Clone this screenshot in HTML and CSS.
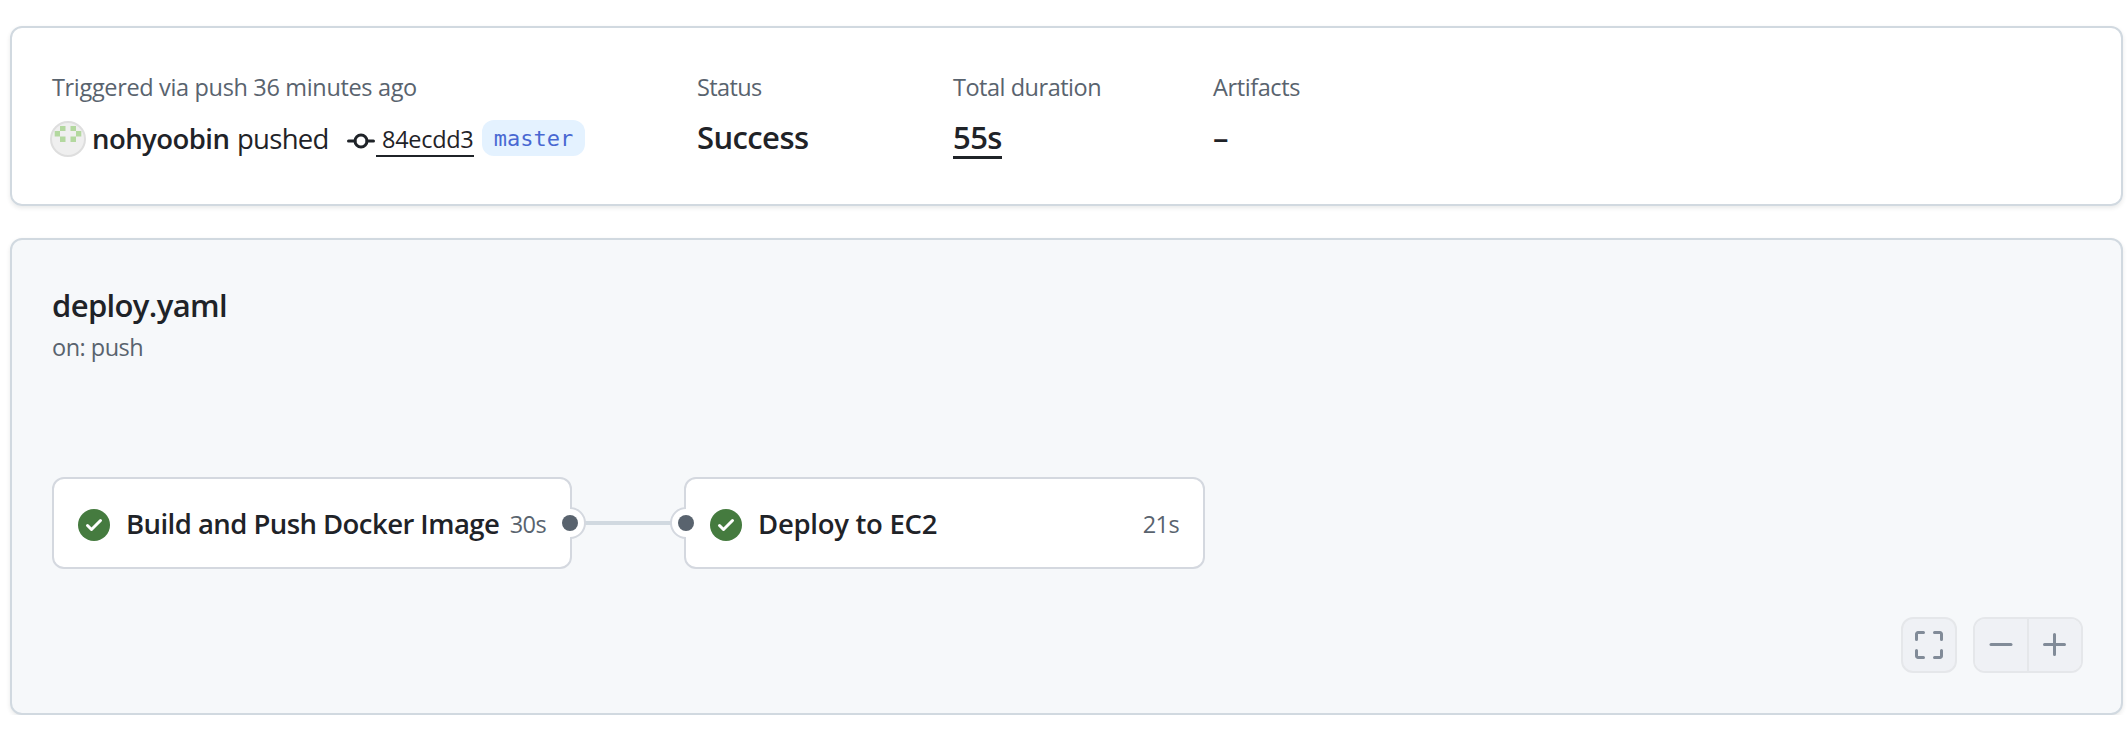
FILE: index.html
```html
<!DOCTYPE html>
<html lang="en">
<head>
<meta charset="utf-8">
<title>deploy.yaml run</title>
<link rel="stylesheet" href="styles.css">
</head>
<body>
<section class="card summary">
  <div class="col">
    <div class="label label-trigger">Triggered via push 36 minutes ago</div>
    <div class="trigger">
      <svg class="avatar" width="36" height="36" viewBox="0 0 36 36"><circle cx="18" cy="18" r="17" fill="#efefef" stroke="#dedede" stroke-width="2"/><path fill="#b3d89f" d="M10 5h5.500v5H10zM4.700 10H10v5.500H4.700zM10 15.500h5.500V21H10zM20.500 5H26v5h-5.500zM26 10h5.300v5.500H26zM20.500 15.500H26V21h-5.500z"/></svg>
      <span class="actor">nohyoobin</span>
      <span class="verb">pushed</span>
      <svg class="commit" width="28" height="16" viewBox="0 0 28 16" fill="none" stroke="#1f2328" stroke-width="3" stroke-linecap="round"><circle cx="14" cy="8" r="6"/><path d="M1.500 8H8M20 8h6.500"/></svg>
      <a class="sha">84ecdd3</a>
      <span class="branch">master</span>
    </div>
  </div>
  <div class="col">
    <div class="label label-status">Status</div>
    <div class="value value-status">Success</div>
  </div>
  <div class="col">
    <div class="label label-duration">Total duration</div>
    <div class="value"><a class="duration">55s</a></div>
  </div>
  <div class="col">
    <div class="label label-artifacts">Artifacts</div>
    <div class="value">–</div>
  </div>
</section>

<section class="card workflow">
  <h1 class="title">deploy.yaml</h1>
  <div class="event">on: push</div>
  <div class="graph">
    <div class="job">
      <svg class="check" width="32" height="32" viewBox="0 0 32 32"><circle cx="16" cy="16" r="16" fill="#457b3f"/><path d="M9.500 16.500l4 4L22.500 11.500" fill="none" stroke="#fff" stroke-width="3" stroke-linecap="round" stroke-linejoin="round"/></svg>
      <span class="name name-build">Build and Push Docker Image</span>
      <span class="time">30s</span>
      <svg class="port port-out" width="32" height="34" viewBox="0 0 32 34"><circle cx="16" cy="17" r="15" fill="#fff"/><path d="M16 2a15 15 0 0 1 0 30" fill="none" stroke="#d4d8df" stroke-width="2"/><circle cx="16" cy="17" r="8" fill="#59636e"/></svg>
    </div>
    <div class="edge"></div>
    <div class="job">
      <svg class="port port-in" width="32" height="34" viewBox="0 0 32 34"><circle cx="16" cy="17" r="15" fill="#fff"/><path d="M16 2a15 15 0 0 0 0 30" fill="none" stroke="#d4d8df" stroke-width="2"/><circle cx="16" cy="17" r="8" fill="#59636e"/></svg>
      <svg class="check" width="32" height="32" viewBox="0 0 32 32"><circle cx="16" cy="16" r="16" fill="#457b3f"/><path d="M9.500 16.500l4 4L22.500 11.500" fill="none" stroke="#fff" stroke-width="3" stroke-linecap="round" stroke-linejoin="round"/></svg>
      <span class="name name-deploy">Deploy to EC2</span>
      <span class="time">21s</span>
    </div>
  </div>
  <div class="controls">
    <button class="btn single" aria-label="Fit"><svg width="28" height="28" viewBox="0 0 28 28"><path d="M1.500 8.500V3a1.500 1.500 0 0 1 1.500-1.500h5.500M19.500 1.500H25A1.500 1.500 0 0 1 26.500 3v5.500M26.500 19.500V25a1.500 1.500 0 0 1-1.500 1.500h-5.500M8.500 26.500H3A1.500 1.500 0 0 1 1.500 25v-5.500"/></svg></button>
    <div class="group">
      <button class="btn" aria-label="Zoom out"><svg width="24" height="24" viewBox="0 0 24 24"><path d="M2 11.500h20"/></svg></button>
      <button class="btn" aria-label="Zoom in"><svg width="24" height="24" viewBox="0 0 24 24"><path d="M1.500 11.500h20M11.500 1.500v20"/></svg></button>
    </div>
  </div>
</section>
</body>
</html>
```
FILE: styles.css
```css
* { box-sizing: border-box; }
body {
  margin: 0;
  padding: 26px 5px 0 10px;
  background: #fff;
  color: #1f2328;
  font-family: "Open Sans", "Noto Sans", sans-serif;
}
svg { display: block; flex: none; }
.card {
  border: 2px solid #d1d9e0;
  border-radius: 12px;
  box-shadow: 0 2px 4px rgba(31, 35, 40, 0.1);
}
.summary {
  height: 180px;
  padding: 40px 40px 0;
  display: grid;
  grid-template-columns: 645px 256px 260px 1fr;
}
.label {
  font-size: 23.5px;
  line-height: 38px;
  color: #59636e;
  white-space: nowrap;
}
.label-trigger { letter-spacing: -0.34px; }
.label-status { letter-spacing: -0.6px; }
.label-duration { letter-spacing: -0.48px; }
.label-artifacts { letter-spacing: -0.4px; }
.value {
  margin-top: 8px;
  height: 48px;
  line-height: 46px;
  font-size: 31px;
  font-weight: 600;
  letter-spacing: -0.6px;
}
.duration {
  display: inline-block;
  line-height: 38px;
  border-bottom: 3px solid #1f2328;
}
.trigger {
  margin-top: 8px;
  height: 48px;
  display: flex;
  align-items: center;
  white-space: nowrap;
  font-size: 27.5px;
}
.avatar { margin: 2px 6px 0 -2px; }
.actor { width: 145px; font-weight: 600; letter-spacing: -0.55px; }
.verb { width: 110px; letter-spacing: -0.7px; }
.actor, .verb { padding-top: 1px; }
.commit { margin-top: 5px; }
.sha {
  width: 98px;
  height: 34px;
  margin: 4px 8px 0 1px;
  padding-left: 6px;
  border-bottom: 2px solid #1f2328;
  font-size: 23.5px;
  line-height: 33px;
  letter-spacing: -0.3px;
}
.branch {
  width: 103px;
  height: 36px;
  border-radius: 12px;
  background: #e4f2ff;
  color: #4868d2;
  font: 22px/37px "DejaVu Sans Mono", monospace;
  text-align: center;
}
.workflow {
  margin-top: 32px;
  height: 477px;
  padding: 40px 38px 0 40px;
  background: #f6f8fa;
}
.title {
  margin: 0;
  font-size: 31px;
  line-height: 50px;
  font-weight: 600;
  letter-spacing: -0.63px;
}
.event {
  font-size: 23.5px;
  line-height: 34px;
  color: #59636e;
  letter-spacing: -0.5px;
}
.graph {
  margin-top: 113px;
  display: flex;
  align-items: center;
}
.job {
  position: relative;
  width: 520px;
  height: 92px;
  padding: 0 24px;
  border: 2px solid #d4d8df;
  border-radius: 12px;
  background: #fff;
  display: flex;
  align-items: center;
}
.edge + .job { width: 521px; }
.check { margin: 4px 16px 0 0; }
.name {
  flex: 1;
  padding-top: 1px;
  font-size: 27.5px;
  font-weight: 600;
  white-space: nowrap;
}
.name-build { letter-spacing: -0.55px; }
.name-deploy { letter-spacing: -0.28px; }
.time {
  padding-top: 2px;
  font-size: 23.5px;
  color: #59636e;
  letter-spacing: -0.6px;
}
.port { position: absolute; top: 27px; }
.port-out { right: -16px; }
.port-in { left: -16px; }
.edge {
  width: 112px;
  height: 4px;
  background: #d1d9e0;
}
.controls {
  margin-top: 48px;
  display: flex;
  justify-content: flex-end;
  gap: 16px;
}
.btn {
  width: 54px;
  height: 52px;
  padding: 0;
  border: 0;
  background: #eff1f5;
  display: flex;
  align-items: center;
  justify-content: center;
}
.btn svg {
  fill: none;
  stroke: #818b98;
  stroke-width: 3;
  stroke-linecap: round;
}
.single, .group {
  height: 56px;
  border: 2px solid #e5e7ea;
  border-radius: 12px;
  overflow: hidden;
}
.single { width: 56px; }
.group { width: 110px; display: flex; }
.group .btn { width: 52px; }
.group .btn + .btn { width: 54px; border-left: 2px solid #e5e7ea; }
```
